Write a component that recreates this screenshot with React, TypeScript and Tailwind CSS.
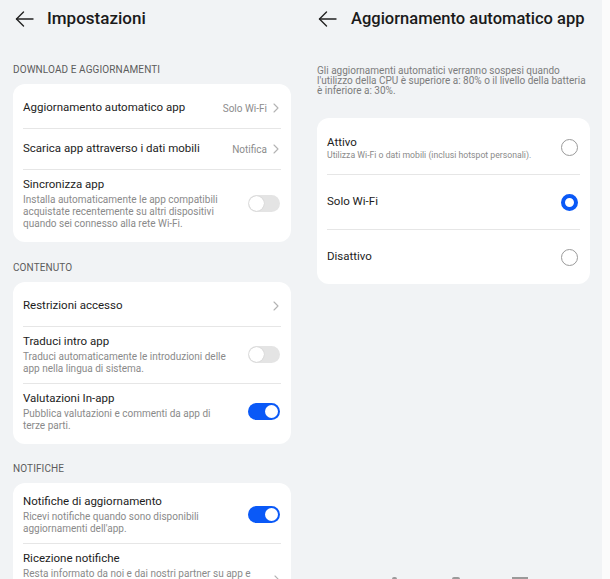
import React from "react";

// Simple thin back arrow used in both headers
const BackArrow = () => (
  <svg width="19" height="16" viewBox="0 0 19 16" fill="none" stroke="#222" strokeWidth="1.4" strokeLinecap="round" strokeLinejoin="round">
    <path d="M1.5 8H18" />
    <path d="M8.5 1L1.5 8l7 7" />
  </svg>
);

const Chevron = () => (
  <svg width="6" height="10" viewBox="0 0 6 10" fill="none" stroke="#b3b3b3" strokeWidth="1.1" strokeLinecap="round" strokeLinejoin="round">
    <path d="M1 1l4 4-4 4" />
  </svg>
);

const Toggle = ({ on }: { on: boolean }) =>
  on ? (
    <div className="w-[32px] h-[17px] rounded-full bg-[#0a59f7] flex items-center justify-end pr-[2px] shrink-0">
      <div className="w-[13px] h-[13px] rounded-full bg-white" />
    </div>
  ) : (
    <div className="w-[32px] h-[17px] rounded-full bg-[#e4e4e4] flex items-center pl-[1px] shrink-0">
      <div className="w-[15px] h-[15px] rounded-full bg-white shadow-[0_0_1px_rgba(0,0,0,0.25)]" />
    </div>
  );

const Divider = () => <div className="h-px bg-[#e6e6e6] mx-[10px]" />;

const Label = ({ text, top }: { text: string; top: string }) => (
  <div className={`${top} mb-[7px] h-[14px] leading-[14px] text-[10px] text-[#5c5c5c] tracking-[0.1px]`}>{text}</div>
);

interface Row {
  title: string;
  desc?: string[];
  value?: string;
  chevron?: boolean;
  toggle?: boolean;
}

const SettingRow = ({ row }: { row: Row }) => {
  if (!row.desc) {
    return (
      <div className="h-[40px] flex items-center justify-between pl-[10px] pr-[12px]">
        <span className="text-[11.5px] text-[#1c1c1c]">{row.title}</span>
        <div className="flex items-center gap-[6px]">
          {row.value && <span className="text-[10px] text-[#8c8c8c]">{row.value}</span>}
          <Chevron />
        </div>
      </div>
    );
  }
  return (
    <div className="flex items-center justify-between pl-[10px] pr-[11px] pt-[6px] pb-[8px]">
      <div className="flex flex-col">
        <span className="text-[11.5px] leading-[16px] text-[#1c1c1c]">{row.title}</span>
        <div className="mt-[2px] text-[10px] leading-[12px] text-[#8a8a8a]">
          {row.desc.map((d) => (
            <div key={d}>{d}</div>
          ))}
        </div>
      </div>
      {row.toggle !== undefined ? <Toggle on={row.toggle} /> : row.chevron ? <div className="mt-[18px]"><Chevron /></div> : null}
    </div>
  );
};

const Card = ({ rows }: { rows: Row[] }) => (
  <div className="bg-white rounded-[12px] py-[4px]">
    {rows.map((r, i) => (
      <div key={r.title}>
        {i > 0 && <Divider />}
        <SettingRow row={r} />
      </div>
    ))}
  </div>
);

const downloadRows: Row[] = [
  { title: "Aggiornamento automatico app", value: "Solo Wi-Fi" },
  { title: "Scarica app attraverso i dati mobili", value: "Notifica" },
  {
    title: "Sincronizza app",
    desc: [
      "Installa automaticamente le app compatibili",
      "acquistate recentemente su altri dispositivi",
      "quando sei connesso alla rete Wi-Fi.",
    ],
    toggle: false,
  },
];

const contentRows: Row[] = [
  { title: "Restrizioni accesso" },
  {
    title: "Traduci intro app",
    desc: ["Traduci automaticamente le introduzioni delle", "app nella lingua di sistema."],
    toggle: false,
  },
  {
    title: "Valutazioni In-app",
    desc: ["Pubblica valutazioni e commenti da app di", "terze parti."],
    toggle: true,
  },
];

const notifyRows: Row[] = [
  {
    title: "Notifiche di aggiornamento",
    desc: ["Ricevi notifiche quando sono disponibili", "aggiornamenti dell'app."],
    toggle: true,
  },
  {
    title: "Ricezione notifiche",
    desc: ["Resta informato da noi e dai nostri partner su app e", "offerte."],
    chevron: true,
  },
];

const Radio = ({ checked }: { checked: boolean }) =>
  checked ? (
    <div className="w-[17px] h-[17px] rounded-full border-[4.5px] border-[#0a59f7] bg-white shrink-0" />
  ) : (
    <div className="w-[17px] h-[17px] rounded-full border border-[#9a9a9a] bg-white shrink-0" />
  );

export default function App() {
  return (
    <div
      className="w-[610px] h-[579px] overflow-hidden flex bg-[#f1f3f5]"
      style={{ fontFamily: "Roboto, 'Noto Sans', sans-serif" }}
    >
      {/* Left screen: Impostazioni */}
      <div className="w-[302px] shrink-0 pl-[13px] pr-[11px]">
        <div className="h-[38px] flex items-center">
          <div className="ml-[2px] w-[32px]">
            <BackArrow />
          </div>
          <span className="text-[17px] text-[#1a1a1a] font-medium">Impostazioni</span>
        </div>
        <Label text="DOWNLOAD E AGGIORNAMENTI" top="mt-[25px]" />
        <Card rows={downloadRows} />
        <Label text="CONTENUTO" top="mt-[19px]" />
        <Card rows={contentRows} />
        <Label text="NOTIFICHE" top="mt-[18px]" />
        <Card rows={notifyRows} />
      </div>

      {/* Right screen: Aggiornamento automatico app */}
      <div className="w-[300px] shrink-0 pl-[15px] pr-[12px] flex flex-col">
        <div className="h-[38px] flex items-center">
          <div className="ml-[1px] w-[33px]">
            <BackArrow />
          </div>
          <span className="text-[16.5px] text-[#1a1a1a] font-medium whitespace-nowrap">Aggiornamento automatico app</span>
        </div>
        <div className="mt-[28px] text-[10px] leading-[10px] text-[#7c7c7c] whitespace-nowrap">
          Gli aggiornamenti automatici verranno sospesi quando
          <br />
          l'utilizzo della CPU è superiore a: 80% o il livello della batteria
          <br />è inferiore a: 30%.
        </div>
        <div className="mt-[22px] bg-white rounded-[12px] pt-[2px]">
          <div className="h-[54px] flex items-center justify-between pl-[10px] pr-[12px]">
            <div className="flex flex-col">
              <span className="text-[11.5px] leading-[16px] text-[#1c1c1c]">Attivo</span>
              <span className="text-[8.7px] leading-[11px] text-[#8a8a8a]">
                Utilizza Wi-Fi o dati mobili (inclusi hotspot personali).
              </span>
            </div>
            <Radio checked={false} />
          </div>
          <Divider />
          <div className="h-[54px] flex items-center justify-between pl-[10px] pr-[12px]">
            <span className="text-[11.5px] text-[#1c1c1c]">Solo Wi-Fi</span>
            <Radio checked={true} />
          </div>
          <Divider />
          <div className="h-[54px] flex items-center justify-between pl-[10px] pr-[12px]">
            <span className="text-[11.5px] text-[#1c1c1c]">Disattivo</span>
            <Radio checked={false} />
          </div>
        </div>
        {/* tops of the system navigation icons, cut off at the bottom */}
        <div className="mt-auto h-[3px] flex items-end">
          <div className="ml-[75px] w-[5px] h-[2px] bg-[#9a9a9a] rounded-t-full" />
          <div className="ml-[55px] w-[8px] h-[2px] bg-[#9a9a9a] rounded-t-full" />
          <div className="ml-[52px] w-[16px] h-[2px] bg-[#9a9a9a]" />
        </div>
      </div>

      <div className="flex-1 bg-[#fbfbfb]" />
    </div>
  );
}
